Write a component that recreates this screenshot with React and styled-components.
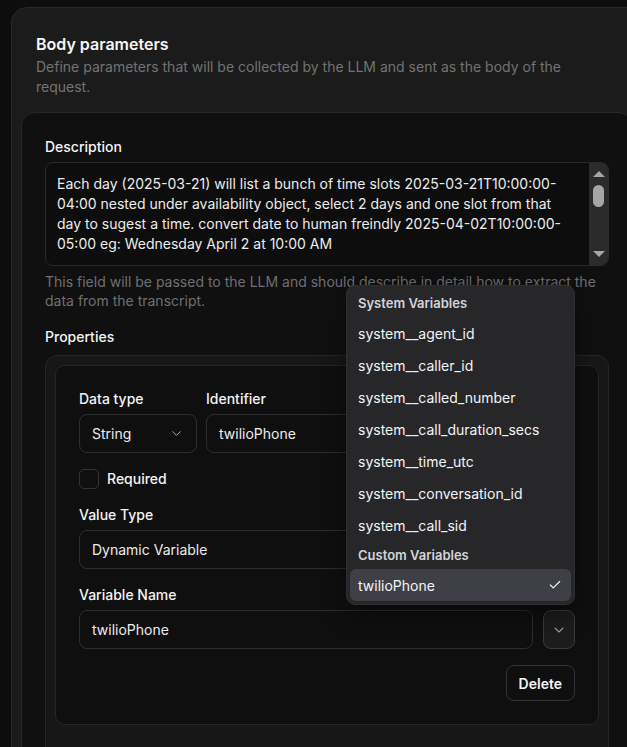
import React from "react";
import styled, { createGlobalStyle } from "styled-components";
import { ChevronDown, Check } from "lucide-react";

const GlobalStyle = createGlobalStyle`
  * { box-sizing: border-box; }
  html, body {
    margin: 0;
    padding: 0;
    background: #0d0d0d;
  }
  body {
    font-family: Inter, "Noto Sans", sans-serif;
    color: #f4f4f5;
    -webkit-font-smoothing: antialiased;
  }
`;

const Page = styled.div`
  width: 627px;
  height: 747px;
  overflow: hidden;
  padding: 7px 0 0 11px;
`;

const OuterCard = styled.section`
  width: 632px;
  background: #1b1b1b;
  border: 1px solid #2a2a2a;
  border-radius: 16px;
  padding: 0 9px 40px;
`;

const Header = styled.header`
  padding: 26px 15px 15px;
`;

const Title = styled.h2`
  margin: 0;
  font-size: 16px;
  font-weight: 600;
  line-height: 20px;
  color: #f5f5f5;
`;

const Subtitle = styled.p`
  margin: 3px 0 0;
  max-width: 545px;
  font-size: 14px;
  line-height: 20px;
  color: #737373;
`;

const InnerCard = styled.div`
  background: #101010;
  border: 1px solid #272727;
  border-radius: 14px;
  padding: 24px 23px 30px;
`;

const Label = styled.div`
  font-size: 14px;
  font-weight: 500;
  line-height: 20px;
  color: #f4f4f5;
  margin-top: ${(p) => p.$top || 0}px;
  margin-bottom: ${(p) => (p.$bottom === undefined ? 5 : p.$bottom)}px;
`;

const TextBox = styled.div`
  display: flex;
  height: 104px;
  background: #0d0d0d;
  border: 1px solid #2a2a2a;
  border-radius: 8px;
  overflow: hidden;
`;

const TextBody = styled.div`
  flex: 1;
  padding: 11px 12px 11px 11px;
  font-size: 14px;
  line-height: 20px;
  color: #ececec;
  span { display: block; white-space: nowrap; }
`;

const ScrollTrack = styled.div`
  width: 19px;
  background: #2b2b2b;
  display: flex;
  flex-direction: column;
  align-items: center;
  padding: 8px 0;
`;

const Arrow = styled.div`
  width: 0;
  height: 0;
  border-left: 6px solid transparent;
  border-right: 6px solid transparent;
  ${(p) =>
    p.$down
      ? "border-top: 6px solid #a6a6a6; margin-top: auto;"
      : "border-bottom: 6px solid #a6a6a6;"}
`;

const Thumb = styled.div`
  width: 11px;
  height: 22px;
  margin-top: 8px;
  border-radius: 6px;
  background: #a6a6a6;
`;

const Helper = styled.p`
  margin: 6px 0 0;
  font-size: 14px;
  line-height: 19px;
  color: #6f6f73;
`;

const PropsBox = styled.div`
  background: #171717;
  border: 1px solid #262626;
  border-radius: 12px;
  padding: 9px 9px 40px;
`;

const ItemCard = styled.div`
  position: relative;
  background: #0f0f0f;
  border: 1px solid #262626;
  border-radius: 10px;
  padding: 23px;
`;

const Row = styled.div`
  display: flex;
  gap: ${(p) => p.$gap || 9}px;
  align-items: flex-end;
`;

const Field = styled.div`
  display: flex;
  flex-direction: column;
  ${(p) => (p.$width ? `width: ${p.$width}px; flex: none;` : "flex: 1;")}
`;

const Control = styled.div`
  height: 39px;
  display: flex;
  align-items: center;
  justify-content: space-between;
  padding: 0 12px;
  background: #0f0f0f;
  border: 1px solid #2e2e2e;
  border-radius: 8px;
  font-size: 14px;
  color: #ececec;
  white-space: nowrap;
  svg { color: #a1a1aa; flex: none; }
`;

const CheckRow = styled.label`
  display: flex;
  align-items: center;
  gap: 8px;
  margin-top: 16px;
  font-size: 14px;
  font-weight: 500;
  line-height: 20px;
`;

const CheckBox = styled.span`
  width: 20px;
  height: 20px;
  border: 1px solid #333;
  border-radius: 5px;
`;

const IconButton = styled.button`
  width: 32px;
  height: 39px;
  flex: none;
  display: flex;
  align-items: center;
  justify-content: center;
  padding: 0;
  background: #1c1c1c;
  border: 1px solid #3a3a3a;
  border-radius: 8px;
  color: #9a9aa0;
`;

const Actions = styled.div`
  display: flex;
  justify-content: flex-end;
  margin-top: 16px;
`;

const DeleteButton = styled.button`
  height: 36px;
  padding: 0 12px;
  background: #0f0f0f;
  border: 1px solid #333;
  border-radius: 8px;
  font-family: inherit;
  font-size: 14px;
  font-weight: 600;
  color: #f4f4f5;
`;

const Menu = styled.div`
  position: absolute;
  top: -81px;
  right: 23px;
  width: 229px;
  z-index: 10;
  padding: 3px;
  background: #27272a;
  border: 1px solid #2f2f33;
  border-radius: 9px;
  box-shadow: 0 8px 24px rgba(0, 0, 0, 0.45);
`;

const GroupLabel = styled.div`
  height: 28px;
  display: flex;
  align-items: center;
  padding: 0 8px;
  font-size: 13px;
  font-weight: 600;
  color: #d4d4d8;
`;

const MenuItem = styled.div`
  height: 32px;
  display: flex;
  align-items: center;
  justify-content: space-between;
  padding: 0 9px 0 8px;
  border-radius: 6px;
  font-size: 14px;
  color: #f4f4f5;
  background: ${(p) => (p.$selected ? "#3f3f46" : "transparent")};
`;

const descriptionLines = [
  "Each day (2025-03-21) will list a bunch of time slots 2025-03-21T10:00:00-",
  "04:00 nested under availability object, select 2 days and one slot from that",
  "day to sugest a time. convert date to human freindly 2025-04-02T10:00:00-",
  "05:00 eg: Wednesday April 2 at 10:00 AM",
];

const systemVars = [
  "system__agent_id",
  "system__caller_id",
  "system__called_number",
  "system__call_duration_secs",
  "system__time_utc",
  "system__conversation_id",
  "system__call_sid",
];

export default function App() {
  return (
    <Page>
      <GlobalStyle />
      <OuterCard>
        <Header>
          <Title>Body parameters</Title>
          <Subtitle>
            Define parameters that will be collected by the LLM and sent as the body of the request.
          </Subtitle>
        </Header>
        <InnerCard>
          <Label>Description</Label>
          <TextBox>
            <TextBody>
              {descriptionLines.map((line) => (
                <span key={line}>{line}</span>
              ))}
            </TextBody>
            <ScrollTrack>
              <Arrow />
              <Thumb />
              <Arrow $down />
            </ScrollTrack>
          </TextBox>
          <Helper>
            This field will be passed to the LLM and should describe in detail how to extract the
            <br />
            data from the transcript.
          </Helper>

          <Label $top={17} $bottom={8}>Properties</Label>
          <PropsBox>
            <ItemCard>
              <Row>
                <Field $width={118}>
                  <Label>Data type</Label>
                  <Control>
                    String
                    <ChevronDown size={15} strokeWidth={1.6} />
                  </Control>
                </Field>
                <Field>
                  <Label>Identifier</Label>
                  <Control>twilioPhone</Control>
                </Field>
              </Row>

              <CheckRow>
                <CheckBox />
                Required
              </CheckRow>

              <Label $top={16}>Value Type</Label>
              <Control>
                Dynamic Variable
                <ChevronDown size={15} strokeWidth={1.6} />
              </Control>

              <Label $top={16}>Variable Name</Label>
              <Row $gap={10}>
                <Field>
                  <Control>twilioPhone</Control>
                </Field>
                <IconButton>
                  <ChevronDown size={16} strokeWidth={1.6} />
                </IconButton>
              </Row>

              <Actions>
                <DeleteButton>Delete</DeleteButton>
              </Actions>

              <Menu>
                <GroupLabel>System Variables</GroupLabel>
                {systemVars.map((v) => (
                  <MenuItem key={v}>{v}</MenuItem>
                ))}
                <GroupLabel>Custom Variables</GroupLabel>
                <MenuItem $selected>
                  twilioPhone
                  <Check size={14} strokeWidth={2} />
                </MenuItem>
              </Menu>
            </ItemCard>
          </PropsBox>
        </InnerCard>
      </OuterCard>
    </Page>
  );
}
